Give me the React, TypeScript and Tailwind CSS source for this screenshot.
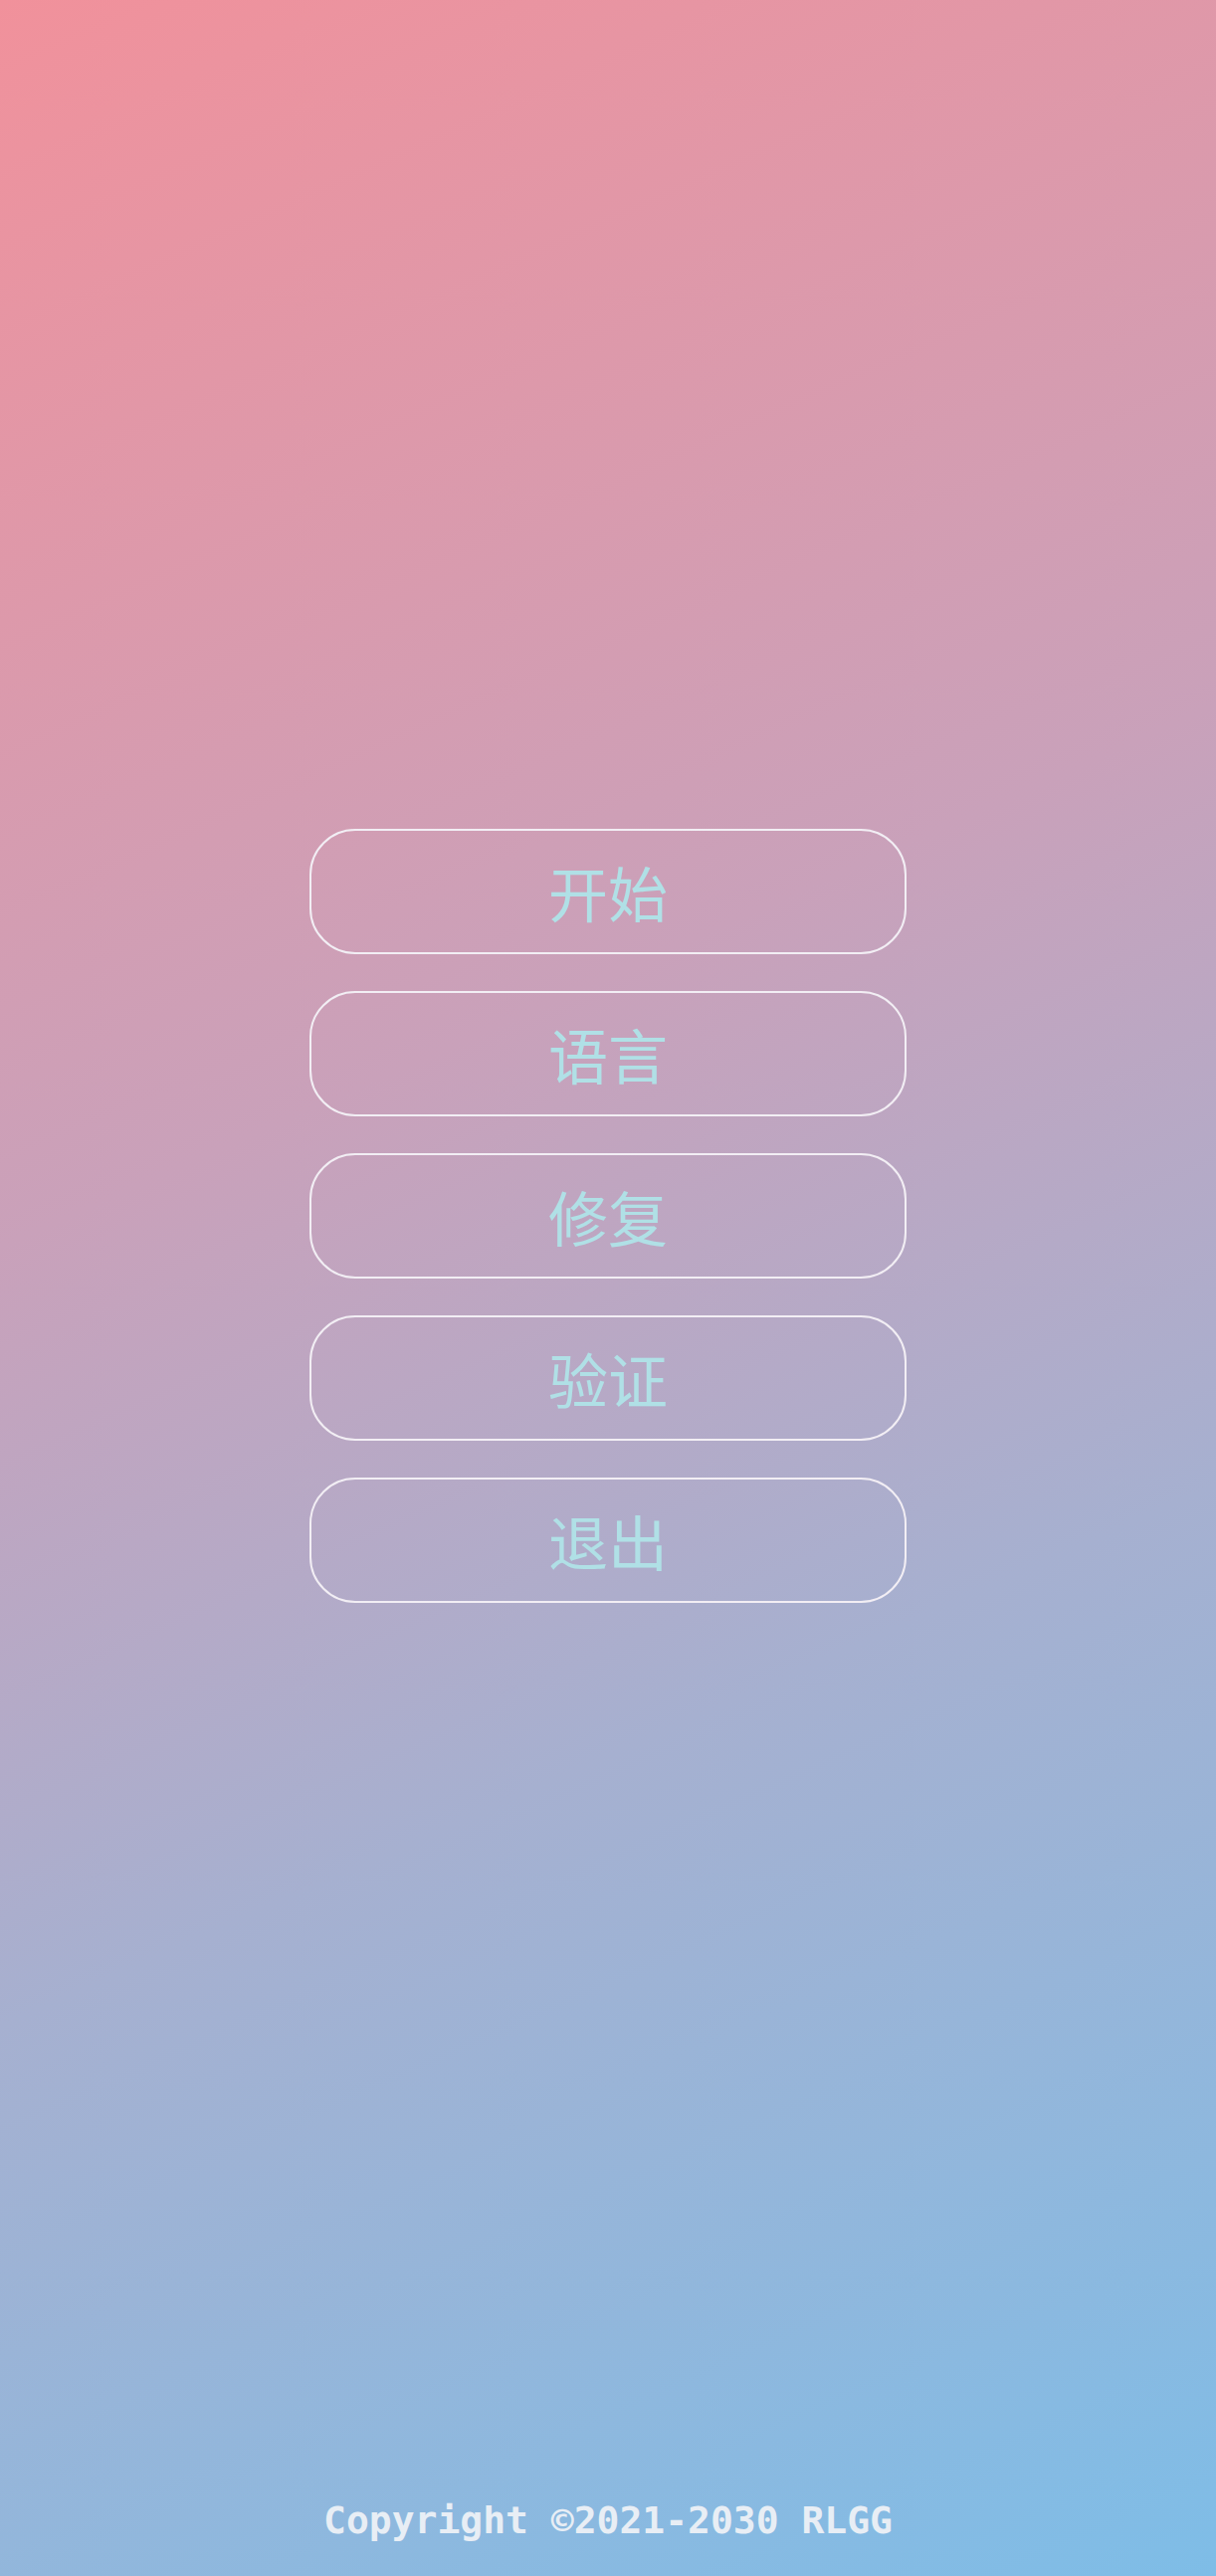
const menuItems = ["开始", "语言", "修复", "验证", "退出"];

export default function App() {
	return (
		<div className="flex min-h-[2589px] w-full flex-col bg-[linear-gradient(156deg,#f1919b_0%,#c9a1ba_40%,#a6b0d0_65%,#7ebde7_100%)]">
			<main className="flex flex-1 items-center justify-center">
				<nav className="flex w-[600px] flex-col gap-[37px]">
					{menuItems.map((label) => (
						<button
							key={label}
							type="button"
							className="flex h-[126px] w-full items-center justify-center rounded-[46px] border-2 border-[#f2eef4] bg-transparent text-[60px] leading-none text-[#b0e0e6] [font-family:'Noto_Sans_CJK_SC',sans-serif]"
						>
							{label}
						</button>
					))}
				</nav>
			</main>

			<footer className="flex h-[145px] items-end justify-center pb-[27px]">
				<p className="text-[38px] font-bold text-[#e8eef5] [font-family:'DejaVu_Sans_Mono',monospace]">
					Copyright ©2021-2030 RLGG
				</p>
			</footer>
		</div>
	);
}
